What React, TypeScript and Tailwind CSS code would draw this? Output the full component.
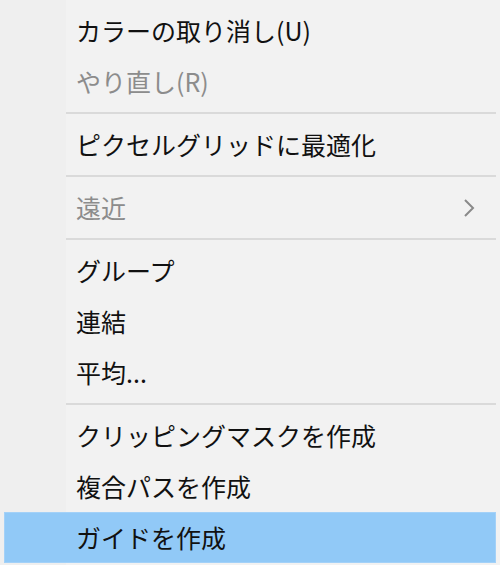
type Item =
  | { kind: "item"; label: string; disabled?: boolean; submenu?: boolean; active?: boolean }
  | { kind: "sep" };

const items: Item[] = [
  { kind: "item", label: "カラーの取り消し(U)" },
  { kind: "item", label: "やり直し(R)", disabled: true },
  { kind: "sep" },
  { kind: "item", label: "ピクセルグリッドに最適化" },
  { kind: "sep" },
  { kind: "item", label: "遠近", disabled: true, submenu: true },
  { kind: "sep" },
  { kind: "item", label: "グループ" },
  { kind: "item", label: "連結" },
  { kind: "item", label: "平均..." },
  { kind: "sep" },
  { kind: "item", label: "クリッピングマスクを作成" },
  { kind: "item", label: "複合パスを作成" },
  { kind: "item", label: "ガイドを作成", active: true },
];

function Chevron() {
  return (
    <svg width="14" height="20" viewBox="0 0 14 20" className="mr-[20px]">
      <polyline points="3,2 11,10 3,18" fill="none" stroke="#8a8a8a" strokeWidth="2" />
    </svg>
  );
}

export default function App() {
  return (
    <div className="h-[565px] w-[500px] overflow-hidden bg-[linear-gradient(to_right,#efefef_66px,#f2f2f2_66px)] pt-[5px] font-['Noto_Sans_CJK_JP','Noto_Sans_CJK_SC',sans-serif] text-[25px] leading-none">
      {items.map((item, i) =>
        item.kind === "sep" ? (
          <div key={i} className="ml-[66px] mr-[4px] py-[5px]">
            <div className="h-[2px] bg-[#dadada]" />
          </div>
        ) : (
          <div
            key={i}
            className={
              item.active
                ? "mx-[4px] flex h-[51px] items-center justify-between border border-[#a3d1f8] bg-[#91c9f7] pl-[71px] text-[#111]"
                : `mx-[4px] flex h-[51px] items-center justify-between pl-[72px] ${
                    item.disabled ? "text-[#8c8c8c]" : "text-[#111]"
                  }`
            }
          >
            <span>{item.label}</span>
            {item.submenu ? <Chevron /> : null}
          </div>
        ),
      )}
    </div>
  );
}
